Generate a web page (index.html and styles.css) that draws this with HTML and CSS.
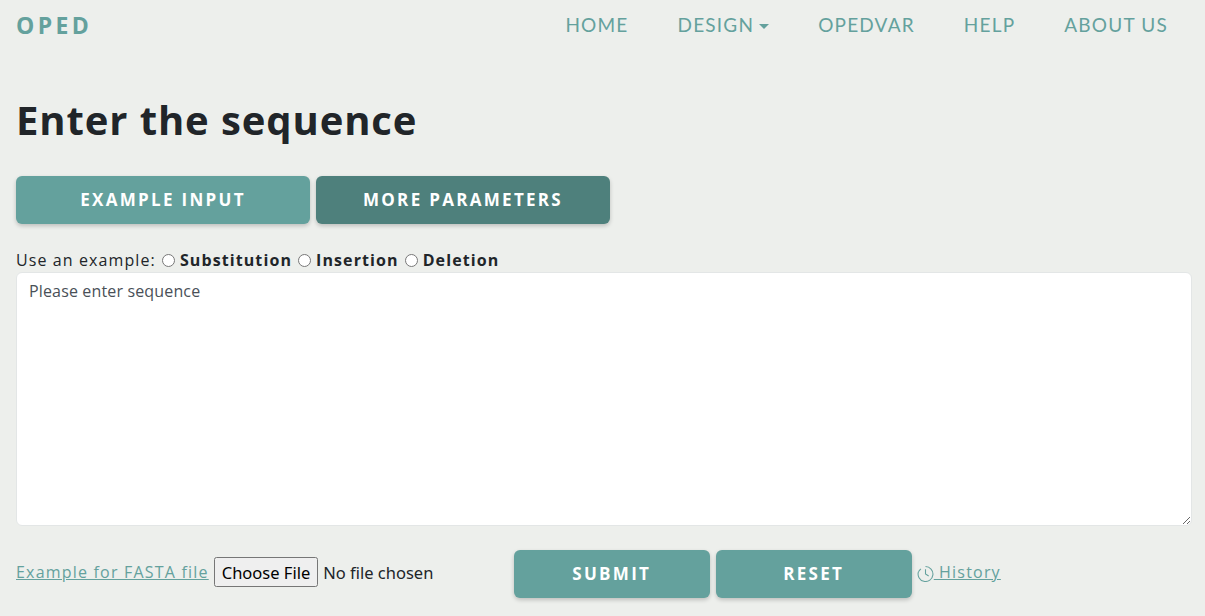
FILE: index.html
```html
<!DOCTYPE html>
<html lang="en">
<head>
<meta charset="utf-8">
<title>OPED</title>
<link rel="stylesheet" href="styles.css">
</head>
<body>
<nav class="navbar">
  <a class="brand" href="#">OPED</a>
  <ul class="menu">
    <li><a href="#">HOME</a></li>
    <li><a href="#" class="caret">DESIGN</a></li>
    <li><a href="#">OPEDVAR</a></li>
    <li><a href="#">HELP</a></li>
    <li><a href="#">ABOUT US</a></li>
  </ul>
</nav>
<main class="content">
  <h1 class="title">Enter the sequence</h1>
  <div class="tabs">
    <button class="btn tab" type="button">EXAMPLE INPUT</button>
    <button class="btn tab dark" type="button">MORE PARAMETERS</button>
  </div>
  <div class="examples">
    <span>Use an example:</span>
    <label><input type="radio" name="ex"><b>Substitution</b></label>
    <label><input type="radio" name="ex"><b>Insertion</b></label>
    <label><input type="radio" name="ex"><b>Deletion</b></label>
  </div>
  <textarea class="seq" placeholder="Please enter sequence"></textarea>
  <div class="actions">
    <a class="link" href="#">Example for FASTA file</a>
    <input class="file" type="file">
    <button class="btn act" type="button">SUBMIT</button>
    <button class="btn act" type="button">RESET</button>
    <a class="link history" href="#"><svg class="clock" viewBox="0 0 16 16" width="17" height="17" fill="none" stroke="currentColor" stroke-width="1"><path d="M8 1.5a7 7 0 1 1-6.6 4.7"/><path d="M1.4 6.2 3.6 3.6"/><path d="M8 4v4.5l3 1.8"/></svg> History</a>
  </div>
</main>
</body>
</html>
```
FILE: styles.css
```css
* { box-sizing: border-box; }
html, body { margin: 0; height: 100%; }
body {
  background: #edefec;
  color: #212529;
  font-family: "Open Sans", "Noto Sans", sans-serif;
  font-size: 16px;
  overflow: hidden;
}
.navbar {
  display: flex;
  justify-content: space-between;
  align-items: center;
  height: 50px;
  padding: 0 13px 0 16px;
}
.brand {
  color: #64a19d;
  font-size: 23px;
  font-weight: 700;
  letter-spacing: 3.4px;
  text-decoration: none;
}
.menu {
  display: flex;
  list-style: none;
  margin: 0;
  padding: 0;
}
.menu li { padding: 0 24.5px; }
.menu li:last-child { padding-right: 24px; }
.menu a {
  color: #64a19d;
  font-family: "Lato", sans-serif;
  font-size: 19px;
  letter-spacing: 1.2px;
  text-decoration: none;
}
.caret::after {
  content: "";
  display: inline-block;
  margin-left: 5px;
  vertical-align: 3px;
  border-top: 5px solid currentColor;
  border-left: 5px solid transparent;
  border-right: 5px solid transparent;
}
.content { padding: 0 13px 0 16px; }
.title {
  margin: 0;
  padding-top: 42px;
  font-size: 40px;
  line-height: 56px;
  font-weight: 700;
  letter-spacing: .9px;
}
.tabs { display: flex; gap: 6px; margin-top: 28px; }
.btn {
  height: 48px;
  padding: 0 0 2px;
  border: 0;
  border-radius: 6px;
  background: #64a19d;
  color: #fff;
  font-family: "Open Sans", sans-serif;
  font-size: 17px;
  font-weight: 700;
  letter-spacing: 2.3px;
  box-shadow: 0 2px 4px rgba(0, 0, 0, .2);
}
.tab { width: 294px; }
.dark { background: #4e807c; }
.examples {
  display: flex;
  align-items: center;
  height: 24px;
  margin-top: 24px;
  font-size: 16px;
  letter-spacing: 1.1px;
}
.examples label { display: flex; align-items: center; }
.examples input { width: 13px; height: 13px; margin: 0 5px 0 6px; }
.seq {
  display: block;
  width: 100%;
  height: 254px;
  padding: 6px 12px;
  border: 1px solid #e3e6e6;
  border-radius: 6px;
  background: #fff;
  color: #495057;
  font: 16px/24px "Open Sans", sans-serif;
  letter-spacing: .15px;
}
.seq::placeholder { color: #495057; opacity: 1; }
.actions { display: flex; align-items: center; margin-top: 24px; }
.link { color: #64a19d; letter-spacing: 1.2px; margin-bottom: 4px; }
.file {
  width: 300px;
  margin: 0 0 4px 5px;
  font-family: "Noto Sans", sans-serif;
  font-size: 16.5px;
}
.file::file-selector-button {
  height: 30px;
  margin-right: 5px;
  padding: 0 6px;
  font: inherit;
}
.act { width: 196px; margin-right: 6px; }
.history { white-space: nowrap; }
.clock { vertical-align: -4px; margin-left: -1px; }
```
